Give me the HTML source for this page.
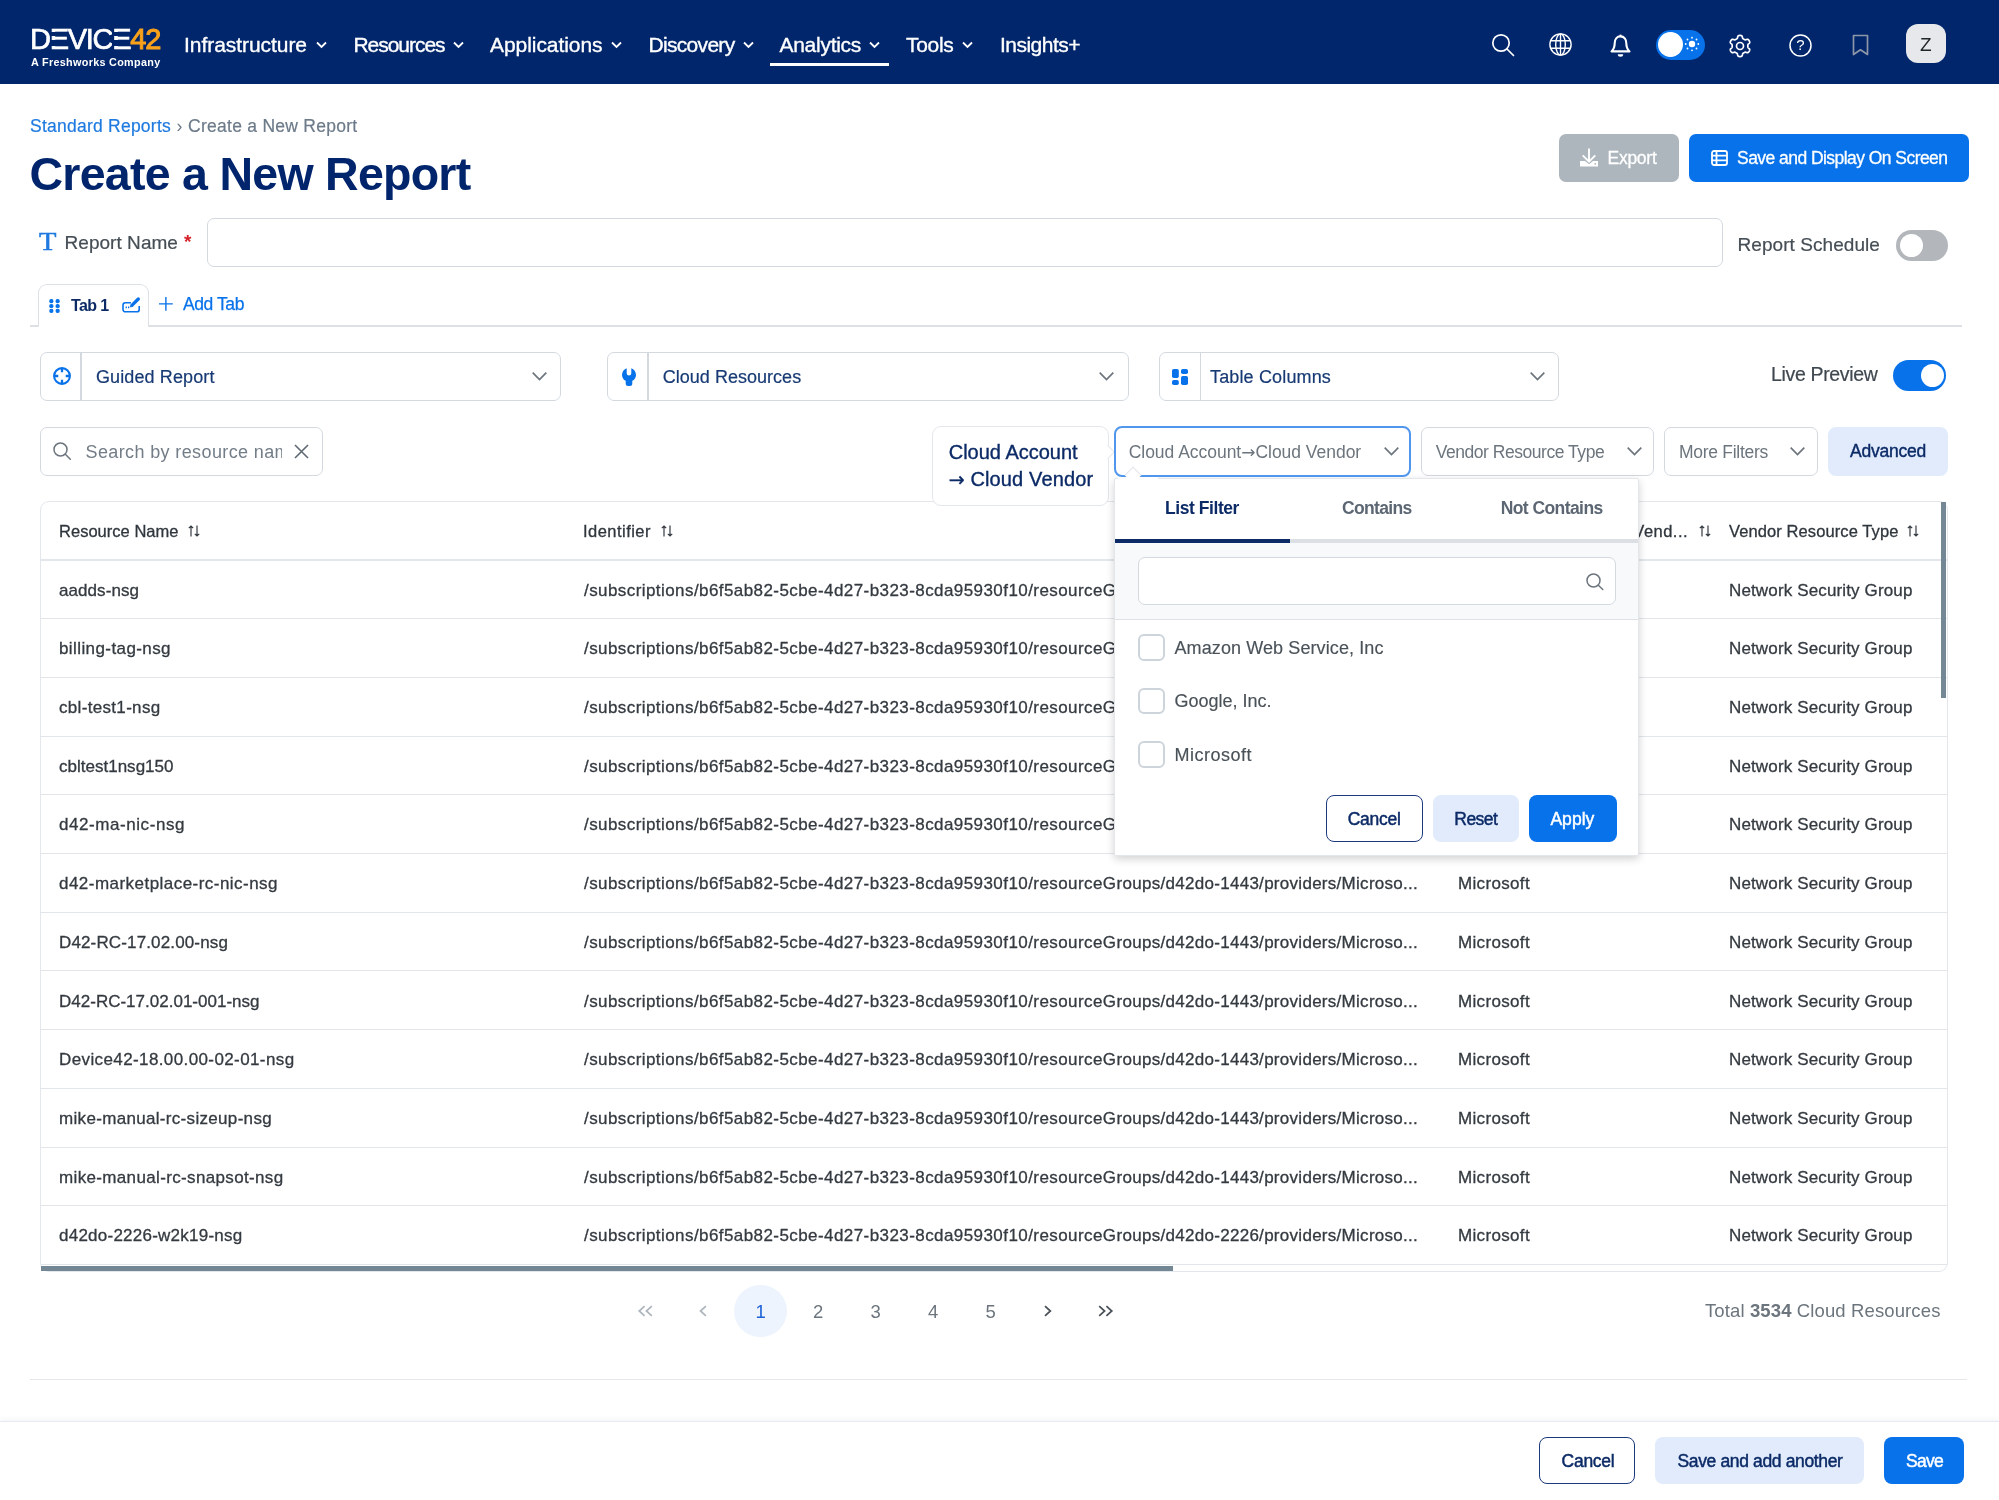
<!DOCTYPE html>
<html lang="en"><head><meta charset="utf-8"><title>Create a New Report</title>
<style>
*{box-sizing:border-box;margin:0;padding:0}
html,body{width:1999px;height:1500px;overflow:hidden;background:#fff}
body{position:relative;font-family:'Liberation Sans',sans-serif;color:#343a40}
.t{position:absolute;white-space:nowrap;line-height:1;display:block}
.a{position:absolute}
.box{position:absolute;border:1.5px solid #d3d9df;border-radius:7px;background:#fff}
svg{position:absolute;overflow:visible}
.nav{position:absolute;left:0;top:0;width:1999px;height:83.5px;background:#01266b}
.hl{position:absolute;height:1.5px;background:#e6e9ed}
.btn{position:absolute;border-radius:7px}
b{font-weight:700}
.root{position:absolute;left:0;top:0;width:1999px;height:1500px;will-change:transform}
.e{position:relative}
.e::before,.e::after{content:"";position:absolute;left:0.2px;width:6.3px;background:#01266b}
.e::before{top:8.5px;height:4.5px}
.e::after{top:16.5px;height:6px}

</style></head>
<body>
<div class="root">
<div class="nav"></div>
<span class="t" style="left:30.00px;top:25.45px;font-size:29px;color:#fff;letter-spacing:-1.281px;-webkit-text-stroke:0.7px #fff;">D<span class="e">E</span>VIC<span class="e">E</span><span style="color:#f9a11b;-webkit-text-stroke:1px #f9a11b">42</span></span>
<span class="t" style="left:31.00px;top:57.16px;font-size:10.8px;color:#fff;font-weight:700;letter-spacing:0.315px;">A Freshworks Company</span>
<span class="t" style="left:184.00px;top:34.22px;font-size:21px;color:#fff;letter-spacing:-0.051px;-webkit-text-stroke:0.35px #fff;">Infrastructure</span>
<svg style="left:315.5px;top:41.300px" width="11" height="8" viewBox="0 0 11 8"><path d="M1 1.500 5.500 6 10 1.500" fill="none" stroke="#fff" stroke-width="1.800"/></svg>
<span class="t" style="left:353.50px;top:34.22px;font-size:21px;color:#fff;letter-spacing:-1.043px;-webkit-text-stroke:0.35px #fff;">Resources</span>
<svg style="left:452.5px;top:41.300px" width="11" height="8" viewBox="0 0 11 8"><path d="M1 1.500 5.500 6 10 1.500" fill="none" stroke="#fff" stroke-width="1.800"/></svg>
<span class="t" style="left:490.00px;top:34.22px;font-size:21px;color:#fff;letter-spacing:-0.061px;-webkit-text-stroke:0.35px #fff;">Applications</span>
<svg style="left:610.5px;top:41.300px" width="11" height="8" viewBox="0 0 11 8"><path d="M1 1.500 5.500 6 10 1.500" fill="none" stroke="#fff" stroke-width="1.800"/></svg>
<span class="t" style="left:648.50px;top:34.22px;font-size:21px;color:#fff;letter-spacing:-0.688px;-webkit-text-stroke:0.35px #fff;">Discovery</span>
<svg style="left:742.5px;top:41.300px" width="11" height="8" viewBox="0 0 11 8"><path d="M1 1.500 5.500 6 10 1.500" fill="none" stroke="#fff" stroke-width="1.800"/></svg>
<span class="t" style="left:779.50px;top:34.22px;font-size:21px;color:#fff;letter-spacing:-0.281px;-webkit-text-stroke:0.35px #fff;">Analytics</span>
<svg style="left:869.0px;top:41.300px" width="11" height="8" viewBox="0 0 11 8"><path d="M1 1.500 5.500 6 10 1.500" fill="none" stroke="#fff" stroke-width="1.800"/></svg>
<span class="t" style="left:906.00px;top:34.22px;font-size:21px;color:#fff;letter-spacing:-0.306px;-webkit-text-stroke:0.35px #fff;">Tools</span>
<svg style="left:962.0px;top:41.300px" width="11" height="8" viewBox="0 0 11 8"><path d="M1 1.500 5.500 6 10 1.500" fill="none" stroke="#fff" stroke-width="1.800"/></svg>
<span class="t" style="left:1000.00px;top:34.22px;font-size:21px;color:#fff;letter-spacing:-0.516px;-webkit-text-stroke:0.35px #fff;">Insights+</span>
<div class="a" style="left:770px;top:63px;width:118.5px;height:3px;background:#fff"></div>
<svg style="left:1491px;top:33px" width="24" height="24" viewBox="0 0 24 24" fill="none" stroke="#fff" stroke-width="1.7"><circle cx="10" cy="10" r="8.2"/><path d="M16 16 22.5 22.5" stroke-linecap="round"/></svg>
<svg style="left:1549px;top:33px" width="23" height="23" viewBox="0 0 23 23" fill="none" stroke="#fff" stroke-width="1.4"><circle cx="11.5" cy="11.5" r="10.6"/><ellipse cx="11.5" cy="11.5" rx="4.8" ry="10.6"/><path d="M11.5 .9V22.1M1.6 7.8H21.4M1.6 15.2H21.4"/></svg>
<svg style="left:1610px;top:34px" width="21" height="24" viewBox="0 0 21 24" fill="none" stroke="#fff" stroke-width="1.9"><path d="M10.500 2.400C6.800 2.400 4.700 5.400 4.700 9.200c0 4-1.300 6.400-3.200 8.200h18c-1.900-1.800-3.200-4.200-3.200-8.200 0-3.800-2.100-6.800-5.800-6.800Z" stroke-linejoin="round" stroke-width="2.100"/><path d="M7.800 20.300h5.400a2.700 2.500 0 0 1-5.400 0Z" fill="#fff" stroke="none"/><path d="M10.500 0.600V2.200"/></svg>
<div class="a" style="left:1656.200px;top:29.800px;width:48.800px;height:30.200px;border-radius:15.100px;background:#0772ea"></div><div class="a" style="left:1658.400px;top:32.400px;width:24.800px;height:24.800px;border-radius:50%;background:#fff"></div>
<svg style="left:1684.400px;top:36.300px" width="16" height="16" viewBox="0 0 16 16" fill="#fff"><circle cx="8" cy="8" r="3.200"/><g><circle cx="8" cy="1.700" r="0.900"/><circle cx="8" cy="14.300" r="0.900"/><circle cx="1.700" cy="8" r="0.900"/><circle cx="14.300" cy="8" r="0.900"/><circle cx="3.500" cy="3.500" r="0.900"/><circle cx="12.500" cy="12.500" r="0.900"/><circle cx="3.500" cy="12.500" r="0.900"/><circle cx="12.500" cy="3.500" r="0.900"/></g></svg>
<svg style="left:1728.300px;top:33.900px" width="24" height="24" viewBox="0 0 24 24" fill="none" stroke="#fff" stroke-width="1.700" stroke-linejoin="round"><path d="M19.83 12.00 19.83 12.21 19.83 12.41 19.83 12.62 19.83 12.82 19.85 13.03 19.90 13.25 20.00 13.48 20.19 13.74 20.49 14.04 20.89 14.38 21.27 14.74 21.54 15.10 21.68 15.43 21.71 15.73 21.68 16.01 21.61 16.28 21.52 16.54 21.41 16.79 21.28 17.04 21.15 17.28 21.01 17.52 20.85 17.75 20.69 17.97 20.51 18.18 20.31 18.38 20.09 18.55 19.81 18.67 19.45 18.71 19.01 18.65 18.51 18.51 18.01 18.34 17.60 18.22 17.28 18.19 17.03 18.21 16.82 18.28 16.63 18.37 16.45 18.47 16.27 18.58 16.09 18.68 15.92 18.78 15.74 18.89 15.56 18.99 15.38 19.09 15.20 19.20 15.03 19.32 14.87 19.46 14.72 19.67 14.59 19.96 14.48 20.38 14.38 20.89 14.26 21.40 14.08 21.81 13.87 22.09 13.63 22.28 13.37 22.39 13.10 22.46 12.83 22.51 12.55 22.54 12.28 22.56 12.00 22.57 11.72 22.56 11.45 22.54 11.17 22.51 10.90 22.46 10.63 22.39 10.37 22.28 10.13 22.09 9.92 21.81 9.74 21.40 9.62 20.89 9.52 20.38 9.41 19.96 9.28 19.67 9.13 19.46 8.97 19.32 8.80 19.20 8.62 19.09 8.44 18.99 8.26 18.89 8.08 18.78 7.91 18.68 7.73 18.58 7.55 18.47 7.37 18.37 7.18 18.28 6.97 18.21 6.72 18.19 6.40 18.22 5.99 18.34 5.49 18.51 4.99 18.65 4.55 18.71 4.19 18.67 3.91 18.55 3.69 18.38 3.49 18.18 3.31 17.97 3.15 17.75 2.99 17.52 2.85 17.28 2.72 17.04 2.59 16.79 2.48 16.54 2.39 16.28 2.32 16.01 2.29 15.73 2.32 15.43 2.46 15.10 2.73 14.74 3.11 14.38 3.51 14.04 3.81 13.74 4.00 13.48 4.10 13.25 4.15 13.03 4.17 12.82 4.17 12.62 4.17 12.41 4.17 12.21 4.17 12.00 4.17 11.79 4.17 11.59 4.17 11.38 4.17 11.18 4.15 10.97 4.10 10.75 4.00 10.52 3.81 10.26 3.51 9.96 3.11 9.62 2.73 9.26 2.46 8.90 2.32 8.57 2.29 8.27 2.32 7.99 2.39 7.72 2.48 7.46 2.59 7.21 2.72 6.96 2.85 6.72 2.99 6.48 3.15 6.25 3.31 6.03 3.49 5.82 3.69 5.62 3.91 5.45 4.19 5.33 4.55 5.29 4.99 5.35 5.49 5.49 5.99 5.66 6.40 5.78 6.72 5.81 6.97 5.79 7.18 5.72 7.37 5.63 7.55 5.53 7.73 5.42 7.91 5.32 8.08 5.22 8.26 5.11 8.44 5.01 8.62 4.91 8.80 4.80 8.97 4.68 9.13 4.54 9.28 4.33 9.41 4.04 9.52 3.62 9.62 3.11 9.74 2.60 9.92 2.19 10.13 1.91 10.37 1.72 10.63 1.61 10.90 1.54 11.17 1.49 11.45 1.46 11.72 1.44 12.00 1.43 12.28 1.44 12.55 1.46 12.83 1.49 13.10 1.54 13.37 1.61 13.63 1.72 13.87 1.91 14.08 2.19 14.26 2.60 14.38 3.11 14.48 3.62 14.59 4.04 14.72 4.33 14.87 4.54 15.03 4.68 15.20 4.80 15.38 4.91 15.56 5.01 15.74 5.11 15.92 5.22 16.09 5.32 16.27 5.42 16.45 5.53 16.63 5.63 16.82 5.72 17.03 5.79 17.28 5.81 17.60 5.78 18.01 5.66 18.51 5.49 19.01 5.35 19.45 5.29 19.81 5.33 20.09 5.45 20.31 5.62 20.51 5.82 20.69 6.03 20.85 6.25 21.01 6.48 21.15 6.72 21.28 6.96 21.41 7.21 21.52 7.46 21.61 7.72 21.68 7.99 21.71 8.27 21.68 8.57 21.54 8.90 21.27 9.26 20.89 9.62 20.49 9.96 20.19 10.26 20.00 10.52 19.90 10.75 19.85 10.97 19.83 11.18 19.83 11.38 19.83 11.59 19.83 11.79Z"/><circle cx="12" cy="12" r="3.500"/></svg>
<svg style="left:1789px;top:33.500px" width="23" height="23" viewBox="0 0 23 23" fill="none" stroke="#fff" stroke-width="1.500"><circle cx="11.500" cy="11.500" r="10.500"/></svg>
<span class="t" style="left:1796.30px;top:37.30px;font-size:15px;color:#fff;">?</span>
<svg style="left:1852px;top:34px" width="17" height="22" viewBox="0 0 17 22" fill="none" stroke="#8d97a8" stroke-width="1.700"><path d="M1.500 1.500H15.500V20.500L8.500 15.800 1.500 20.500Z" stroke-linejoin="round"/></svg>
<div class="a" style="left:1906.300px;top:23.500px;width:39.800px;height:39.800px;border-radius:12px;background:#e6e8eb"></div>
<span class="t" style="left:1920.00px;top:34.92px;font-size:19px;color:#212529;">Z</span>
<span class="t" style="left:30.00px;top:117.89px;font-size:17.5px;color:#1f7ae0;letter-spacing:0.239px;-webkit-text-stroke:0.200px #1f7ae0;">Standard Reports</span>
<span class="t" style="left:176.50px;top:117.89px;font-size:17.5px;color:#6c7a89;">›</span>
<span class="t" style="left:188.00px;top:117.89px;font-size:17.5px;color:#6c7a89;letter-spacing:0.269px;-webkit-text-stroke:0.200px #6c7a89;">Create a New Report</span>
<span class="t" style="left:29.50px;top:150.64px;font-size:46.5px;color:#00256c;font-weight:700;letter-spacing:-0.727px;">Create a New Report</span>
<div class="btn" style="left:1558.500px;top:134px;width:120px;height:47.500px;background:#adb5bd"></div>
<svg style="left:1580px;top:148px" width="19" height="18" viewBox="0 0 19 18" fill="#fff"><path d="M9 0.500V13M2.700 7.300 9 13.600 15.300 7.300" fill="none" stroke="#fff" stroke-width="1.900"/><path d="M0 13h5l4 3.200 4-3.200h5v5.500h-18z"/><circle cx="15.200" cy="15.800" r="0.900" fill="#adb5bd"/></svg>
<span class="t" style="left:1607.50px;top:149.89px;font-size:17.5px;color:#fff;letter-spacing:-0.263px;-webkit-text-stroke:0.3px #fff;">Export</span>
<div class="btn" style="left:1689px;top:134px;width:280px;height:47.500px;background:#0772ea"></div>
<svg style="left:1711px;top:149.500px" width="17" height="16" viewBox="0 0 17 16" fill="none" stroke="#fff" stroke-width="1.800"><rect x="1" y="1" width="15" height="14" rx="2"/><path d="M1 5.700H16M1 10.300H16M5.500 1V15"/></svg>
<span class="t" style="left:1737.00px;top:149.89px;font-size:17.5px;color:#fff;letter-spacing:-0.547px;-webkit-text-stroke:0.3px #fff;">Save and Display On Screen</span>
<span class="t" style="left:38.50px;top:228.91px;font-size:25.5px;color:#1f7ae0;font-family:'Liberation Serif',serif;transform:scaleX(1.12);transform-origin:0 0;-webkit-text-stroke:0.500px #1f7ae0;">T</span>
<span class="t" style="left:64.50px;top:232.62px;font-size:19px;color:#454d55;letter-spacing:0.045px;-webkit-text-stroke:0.2px #454d55;">Report Name</span>
<span class="t" style="left:184.00px;top:232.22px;font-size:19px;color:#d6202a;font-weight:700;">*</span>
<div class="box" style="left:207px;top:217.500px;width:1515.500px;height:49.500px"></div>
<span class="t" style="left:1737.50px;top:234.92px;font-size:19px;color:#454d55;letter-spacing:0.064px;-webkit-text-stroke:0.2px #454d55;">Report Schedule</span>
<div class="a" style="left:1896px;top:230px;width:52px;height:31px;border-radius:16px;background:#b3b7bb"></div><div class="a" style="left:1900px;top:234px;width:23px;height:23px;border-radius:50%;background:#fff"></div>
<div class="hl" style="left:30px;top:325px;width:1931.500px;height:1.800px;background:#dde1e6"></div>
<div class="a" style="left:38px;top:283.700px;width:111px;height:43.300px;border:1.800px solid #dde1e6;border-bottom:none;border-radius:9px 9px 0 0;background:#fff"></div>
<svg style="left:48.800px;top:299.300px" width="11" height="14" viewBox="0 0 10.5 14" fill="#0772ea"><rect x="0" y="0" width="4.200" height="4.200" rx="1.900"/><rect x="0" y="4.9" width="4.200" height="4.200" rx="1.900"/><rect x="0" y="9.8" width="4.200" height="4.200" rx="1.900"/><rect x="6.3" y="0" width="4.200" height="4.200" rx="1.900"/><rect x="6.3" y="4.9" width="4.200" height="4.200" rx="1.900"/><rect x="6.3" y="9.8" width="4.200" height="4.200" rx="1.900"/></svg>
<span class="t" style="left:71.00px;top:297.66px;font-size:16px;color:#0b2a66;font-weight:700;letter-spacing:-0.622px;">Tab 1</span>
<svg style="left:122px;top:296.500px" width="19" height="16" viewBox="0 0 19 16" fill="none" stroke="#0772ea" stroke-width="1.600"><path d="M9 5.800H3.400a2.400 2.400 0 0 0-2.400 2.400v4.200a2.400 2.400 0 0 0 2.400 2.400h11.400a2.400 2.400 0 0 0 2.400-2.400V9"/><path d="M16.300 2 10.600 7.700" stroke-width="3.300" stroke-linecap="round"/><path d="M8.300 10 9 7.300 11 9.300Z" fill="#0772ea" stroke-width="0.800"/><path d="M3.600 10.300h1.300M6 10.300h1.300" stroke-width="1.700"/></svg>
<svg style="left:159.200px;top:297px" width="13.800" height="13.800" viewBox="0 0 13.800 13.800" stroke="#0772ea" stroke-width="1.400"><path d="M6.900 0V13.800M0 6.900H13.800"/></svg>
<span class="t" style="left:183.00px;top:296.19px;font-size:17.5px;color:#0772ea;letter-spacing:-0.415px;-webkit-text-stroke:0.25px #0772ea;">Add Tab</span>
<div class="box" style="left:40px;top:351.500px;width:521px;height:49.500px"></div>
<div class="a" style="left:80.45px;top:352px;width:1.500px;height:48.500px;background:#d3d9df"></div>
<span class="t" style="left:96.00px;top:367.76px;font-size:18px;color:#173a74;letter-spacing:0.109px;-webkit-text-stroke:0.2px #173a74;">Guided Report</span>
<svg style="left:532.2px;top:372.45px" width="15" height="8.5" viewBox="0 0 15 8.5" fill="none" stroke="#6c757d" stroke-width="1.7"><path d="M0.700 0.700 7.5 7.5 14.3 0.700"/></svg>
<div class="box" style="left:606.5px;top:351.500px;width:522.0px;height:49.500px"></div>
<div class="a" style="left:647.45px;top:352px;width:1.500px;height:48.500px;background:#d3d9df"></div>
<span class="t" style="left:662.70px;top:367.76px;font-size:18px;color:#173a74;letter-spacing:0.028px;-webkit-text-stroke:0.2px #173a74;">Cloud Resources</span>
<svg style="left:1099.0px;top:372.45px" width="15" height="8.5" viewBox="0 0 15 8.5" fill="none" stroke="#6c757d" stroke-width="1.7"><path d="M0.700 0.700 7.5 7.5 14.3 0.700"/></svg>
<div class="box" style="left:1159px;top:351.500px;width:399.5px;height:49.500px"></div>
<div class="a" style="left:1199.75px;top:352px;width:1.500px;height:48.500px;background:#d3d9df"></div>
<span class="t" style="left:1210.00px;top:367.76px;font-size:18px;color:#173a74;letter-spacing:0.149px;-webkit-text-stroke:0.2px #173a74;">Table Columns</span>
<svg style="left:1529.5px;top:372.45px" width="15" height="8.5" viewBox="0 0 15 8.5" fill="none" stroke="#6c757d" stroke-width="1.7"><path d="M0.700 0.700 7.5 7.5 14.3 0.700"/></svg>
<svg style="left:52.750px;top:367.300px" width="18" height="18" viewBox="0 0 18 18" fill="none" stroke="#0772ea"><circle cx="9" cy="9" r="7.900" stroke-width="2.100"/><path d="M9 1.500V5.300M9 12.700V16.500M1.500 9H5.300M12.700 9H16.500" stroke-width="2.300"/></svg>
<svg style="left:621.700px;top:367.600px" width="14" height="18" viewBox="0 0 14 18" fill="#0772ea"><path d="M4.700 0.300C2 1.300 0 3.900 0 6.900c0 2.600 1.500 4.800 3.700 5.900V15.500a2.500 2.500 0 0 0 2.500 2.500h1.600a2.500 2.500 0 0 0 2.500-2.500V12.800C12.500 11.700 14 9.500 14 6.900 14 3.900 12 1.300 9.300 0.300V5.200a2.300 2.300 0 0 1-4.600 0Z"/></svg>
<svg style="left:1172px;top:369px" width="16" height="16" viewBox="0 0 16 16" fill="#0772ea"><rect x="0" y="0" width="6.800" height="9" rx="1.800"/><rect x="0" y="11" width="6.800" height="5" rx="1.800"/><rect x="9" y="0" width="7" height="5" rx="1.800"/><rect x="9" y="7" width="7" height="9" rx="1.800"/></svg>
<span class="t" style="left:1771.00px;top:364.69px;font-size:19.5px;color:#3f474f;letter-spacing:-0.337px;-webkit-text-stroke:0.2px #3f474f;">Live Preview</span>
<div class="a" style="left:1893px;top:360px;width:52.500px;height:31px;border-radius:16px;background:#0772ea"></div><div class="a" style="left:1920.500px;top:364px;width:23px;height:23px;border-radius:50%;background:#fff"></div>
<div class="box" style="left:40px;top:427px;width:282.500px;height:49px"></div>
<svg style="left:52.800px;top:442.300px" width="18" height="18" viewBox="0 0 18 18" fill="none" stroke="#6c757d" stroke-width="1.500"><circle cx="7.500" cy="7.500" r="6.500"/><path d="M12.300 12.300 17.300 17.300" stroke-linecap="round"/></svg>
<div class="a" style="left:85px;top:440px;width:196.500px;height:24px;overflow:hidden"><span class="t" style="left:0.50px;top:3.26px;font-size:18px;color:#737d88;letter-spacing:0.380px;">Search by resource name</span></div>
<svg style="left:293.500px;top:444px" width="15" height="15" viewBox="0 0 15 15" stroke="#5f6973" stroke-width="1.600"><path d="M1 1 14 14M14 1 1 14"/></svg>
<div class="a" style="left:40px;top:500.5px;width:1907.5px;height:771.5px;border:1.500px solid #e3e7eb;border-radius:9px;background:#fff"></div>
<div class="hl" style="left:41px;top:559px;width:1905.5px;height:2px;background:#e3e7eb"></div>
<div class="hl" style="left:41px;top:618px;width:1905.5px;height:1px;background:#e2e6ea"></div>
<div class="hl" style="left:41px;top:677px;width:1905.5px;height:1px;background:#e2e6ea"></div>
<div class="hl" style="left:41px;top:736px;width:1905.5px;height:1px;background:#e2e6ea"></div>
<div class="hl" style="left:41px;top:794px;width:1905.5px;height:1px;background:#e2e6ea"></div>
<div class="hl" style="left:41px;top:853px;width:1905.5px;height:1px;background:#e2e6ea"></div>
<div class="hl" style="left:41px;top:912px;width:1905.5px;height:1px;background:#e2e6ea"></div>
<div class="hl" style="left:41px;top:970px;width:1905.5px;height:1px;background:#e2e6ea"></div>
<div class="hl" style="left:41px;top:1029px;width:1905.5px;height:1px;background:#e2e6ea"></div>
<div class="hl" style="left:41px;top:1088px;width:1905.5px;height:1px;background:#e2e6ea"></div>
<div class="hl" style="left:41px;top:1147px;width:1905.5px;height:1px;background:#e2e6ea"></div>
<div class="hl" style="left:41px;top:1205px;width:1905.5px;height:1px;background:#e2e6ea"></div>
<div class="hl" style="left:41px;top:1264px;width:1905.5px;height:1px;background:#e2e6ea"></div>
<span class="t" style="left:59.00px;top:523.03px;font-size:16.5px;color:#2f363d;letter-spacing:0.022px;-webkit-text-stroke:0.3px #2f363d;">Resource Name</span>
<svg style="left:188px;top:525px" width="12" height="12" viewBox="0 0 12 12" fill="none" stroke="#343a40" stroke-width="1.200"><path d="M3 11.500V1M0.800 3.200 3 1 5.200 3.200M9 0.500V11M6.800 8.800 9 11 11.200 8.800"/></svg>
<span class="t" style="left:583.00px;top:523.03px;font-size:16.5px;color:#2f363d;letter-spacing:0.470px;-webkit-text-stroke:0.3px #2f363d;">Identifier</span>
<svg style="left:660.5px;top:525px" width="12" height="12" viewBox="0 0 12 12" fill="none" stroke="#343a40" stroke-width="1.200"><path d="M3 11.500V1M0.800 3.200 3 1 5.200 3.200M9 0.500V11M6.800 8.800 9 11 11.200 8.800"/></svg>
<span class="t" style="left:1458.00px;top:523.03px;font-size:16.5px;color:#2f363d;letter-spacing:0.473px;-webkit-text-stroke:0.3px #2f363d;">Cloud Account<span style="font-family:'DejaVu Sans',sans-serif;font-size:14px">→</span>Cloud Vend...</span>
<svg style="left:1699px;top:525px" width="12" height="12" viewBox="0 0 12 12" fill="none" stroke="#343a40" stroke-width="1.200"><path d="M3 11.500V1M0.800 3.200 3 1 5.200 3.200M9 0.500V11M6.800 8.800 9 11 11.200 8.800"/></svg>
<span class="t" style="left:1729.00px;top:523.03px;font-size:16.5px;color:#2f363d;letter-spacing:0.097px;-webkit-text-stroke:0.3px #2f363d;">Vendor Resource Type</span>
<svg style="left:1907px;top:525px" width="12" height="12" viewBox="0 0 12 12" fill="none" stroke="#343a40" stroke-width="1.200"><path d="M3 11.500V1M0.800 3.200 3 1 5.200 3.200M9 0.500V11M6.800 8.800 9 11 11.200 8.800"/></svg>
<span class="t" style="left:59.00px;top:581.61px;font-size:17px;color:#343a40;letter-spacing:0.068px;-webkit-text-stroke:0.3px #343a40;">aadds-nsg</span>
<span class="t" style="left:584.00px;top:581.61px;font-size:17px;color:#343a40;letter-spacing:0.425px;-webkit-text-stroke:0.3px #343a40;">/subscriptions/b6f5ab82-5cbe-4d27-b323-8cda95930f10/resourceG</span>
<span class="t" style="left:1116.60px;top:581.61px;font-size:17px;color:#343a40;letter-spacing:0.283px;-webkit-text-stroke:0.3px #343a40;">roups/d42do-1443/providers/Microso...</span>
<span class="t" style="left:1458.00px;top:581.61px;font-size:17px;color:#343a40;letter-spacing:0.337px;-webkit-text-stroke:0.3px #343a40;">Microsoft</span>
<span class="t" style="left:1729.00px;top:581.61px;font-size:17px;color:#343a40;letter-spacing:0.138px;-webkit-text-stroke:0.3px #343a40;">Network Security Group</span>
<span class="t" style="left:59.00px;top:640.32px;font-size:17px;color:#343a40;letter-spacing:0.410px;-webkit-text-stroke:0.3px #343a40;">billing-tag-nsg</span>
<span class="t" style="left:584.00px;top:640.32px;font-size:17px;color:#343a40;letter-spacing:0.425px;-webkit-text-stroke:0.3px #343a40;">/subscriptions/b6f5ab82-5cbe-4d27-b323-8cda95930f10/resourceG</span>
<span class="t" style="left:1116.60px;top:640.32px;font-size:17px;color:#343a40;letter-spacing:0.283px;-webkit-text-stroke:0.3px #343a40;">roups/d42do-1443/providers/Microso...</span>
<span class="t" style="left:1458.00px;top:640.32px;font-size:17px;color:#343a40;letter-spacing:0.337px;-webkit-text-stroke:0.3px #343a40;">Microsoft</span>
<span class="t" style="left:1729.00px;top:640.32px;font-size:17px;color:#343a40;letter-spacing:0.138px;-webkit-text-stroke:0.3px #343a40;">Network Security Group</span>
<span class="t" style="left:59.00px;top:699.03px;font-size:17px;color:#343a40;letter-spacing:0.321px;-webkit-text-stroke:0.3px #343a40;">cbl-test1-nsg</span>
<span class="t" style="left:584.00px;top:699.03px;font-size:17px;color:#343a40;letter-spacing:0.425px;-webkit-text-stroke:0.3px #343a40;">/subscriptions/b6f5ab82-5cbe-4d27-b323-8cda95930f10/resourceG</span>
<span class="t" style="left:1116.60px;top:699.03px;font-size:17px;color:#343a40;letter-spacing:0.283px;-webkit-text-stroke:0.3px #343a40;">roups/d42do-1443/providers/Microso...</span>
<span class="t" style="left:1458.00px;top:699.03px;font-size:17px;color:#343a40;letter-spacing:0.337px;-webkit-text-stroke:0.3px #343a40;">Microsoft</span>
<span class="t" style="left:1729.00px;top:699.03px;font-size:17px;color:#343a40;letter-spacing:0.138px;-webkit-text-stroke:0.3px #343a40;">Network Security Group</span>
<span class="t" style="left:59.00px;top:757.74px;font-size:17px;color:#343a40;letter-spacing:0.009px;-webkit-text-stroke:0.3px #343a40;">cbltest1nsg150</span>
<span class="t" style="left:584.00px;top:757.74px;font-size:17px;color:#343a40;letter-spacing:0.425px;-webkit-text-stroke:0.3px #343a40;">/subscriptions/b6f5ab82-5cbe-4d27-b323-8cda95930f10/resourceG</span>
<span class="t" style="left:1116.60px;top:757.74px;font-size:17px;color:#343a40;letter-spacing:0.283px;-webkit-text-stroke:0.3px #343a40;">roups/d42do-1443/providers/Microso...</span>
<span class="t" style="left:1458.00px;top:757.74px;font-size:17px;color:#343a40;letter-spacing:0.337px;-webkit-text-stroke:0.3px #343a40;">Microsoft</span>
<span class="t" style="left:1729.00px;top:757.74px;font-size:17px;color:#343a40;letter-spacing:0.138px;-webkit-text-stroke:0.3px #343a40;">Network Security Group</span>
<span class="t" style="left:59.00px;top:816.45px;font-size:17px;color:#343a40;letter-spacing:0.564px;-webkit-text-stroke:0.3px #343a40;">d42-ma-nic-nsg</span>
<span class="t" style="left:584.00px;top:816.45px;font-size:17px;color:#343a40;letter-spacing:0.425px;-webkit-text-stroke:0.3px #343a40;">/subscriptions/b6f5ab82-5cbe-4d27-b323-8cda95930f10/resourceG</span>
<span class="t" style="left:1116.60px;top:816.45px;font-size:17px;color:#343a40;letter-spacing:0.283px;-webkit-text-stroke:0.3px #343a40;">roups/d42do-1443/providers/Microso...</span>
<span class="t" style="left:1458.00px;top:816.45px;font-size:17px;color:#343a40;letter-spacing:0.337px;-webkit-text-stroke:0.3px #343a40;">Microsoft</span>
<span class="t" style="left:1729.00px;top:816.45px;font-size:17px;color:#343a40;letter-spacing:0.138px;-webkit-text-stroke:0.3px #343a40;">Network Security Group</span>
<span class="t" style="left:59.00px;top:875.16px;font-size:17px;color:#343a40;letter-spacing:0.465px;-webkit-text-stroke:0.3px #343a40;">d42-marketplace-rc-nic-nsg</span>
<span class="t" style="left:584.00px;top:875.16px;font-size:17px;color:#343a40;letter-spacing:0.425px;-webkit-text-stroke:0.3px #343a40;">/subscriptions/b6f5ab82-5cbe-4d27-b323-8cda95930f10/resourceG</span>
<span class="t" style="left:1116.60px;top:875.16px;font-size:17px;color:#343a40;letter-spacing:0.283px;-webkit-text-stroke:0.3px #343a40;">roups/d42do-1443/providers/Microso...</span>
<span class="t" style="left:1458.00px;top:875.16px;font-size:17px;color:#343a40;letter-spacing:0.337px;-webkit-text-stroke:0.3px #343a40;">Microsoft</span>
<span class="t" style="left:1729.00px;top:875.16px;font-size:17px;color:#343a40;letter-spacing:0.138px;-webkit-text-stroke:0.3px #343a40;">Network Security Group</span>
<span class="t" style="left:59.00px;top:933.87px;font-size:17px;color:#343a40;letter-spacing:0.141px;-webkit-text-stroke:0.3px #343a40;">D42-RC-17.02.00-nsg</span>
<span class="t" style="left:584.00px;top:933.87px;font-size:17px;color:#343a40;letter-spacing:0.425px;-webkit-text-stroke:0.3px #343a40;">/subscriptions/b6f5ab82-5cbe-4d27-b323-8cda95930f10/resourceG</span>
<span class="t" style="left:1116.60px;top:933.87px;font-size:17px;color:#343a40;letter-spacing:0.283px;-webkit-text-stroke:0.3px #343a40;">roups/d42do-1443/providers/Microso...</span>
<span class="t" style="left:1458.00px;top:933.87px;font-size:17px;color:#343a40;letter-spacing:0.337px;-webkit-text-stroke:0.3px #343a40;">Microsoft</span>
<span class="t" style="left:1729.00px;top:933.87px;font-size:17px;color:#343a40;letter-spacing:0.138px;-webkit-text-stroke:0.3px #343a40;">Network Security Group</span>
<span class="t" style="left:59.00px;top:992.58px;font-size:17px;color:#343a40;letter-spacing:0.007px;-webkit-text-stroke:0.3px #343a40;">D42-RC-17.02.01-001-nsg</span>
<span class="t" style="left:584.00px;top:992.58px;font-size:17px;color:#343a40;letter-spacing:0.425px;-webkit-text-stroke:0.3px #343a40;">/subscriptions/b6f5ab82-5cbe-4d27-b323-8cda95930f10/resourceG</span>
<span class="t" style="left:1116.60px;top:992.58px;font-size:17px;color:#343a40;letter-spacing:0.283px;-webkit-text-stroke:0.3px #343a40;">roups/d42do-1443/providers/Microso...</span>
<span class="t" style="left:1458.00px;top:992.58px;font-size:17px;color:#343a40;letter-spacing:0.337px;-webkit-text-stroke:0.3px #343a40;">Microsoft</span>
<span class="t" style="left:1729.00px;top:992.58px;font-size:17px;color:#343a40;letter-spacing:0.138px;-webkit-text-stroke:0.3px #343a40;">Network Security Group</span>
<span class="t" style="left:59.00px;top:1051.29px;font-size:17px;color:#343a40;letter-spacing:0.392px;-webkit-text-stroke:0.3px #343a40;">Device42-18.00.00-02-01-nsg</span>
<span class="t" style="left:584.00px;top:1051.29px;font-size:17px;color:#343a40;letter-spacing:0.425px;-webkit-text-stroke:0.3px #343a40;">/subscriptions/b6f5ab82-5cbe-4d27-b323-8cda95930f10/resourceG</span>
<span class="t" style="left:1116.60px;top:1051.29px;font-size:17px;color:#343a40;letter-spacing:0.283px;-webkit-text-stroke:0.3px #343a40;">roups/d42do-1443/providers/Microso...</span>
<span class="t" style="left:1458.00px;top:1051.29px;font-size:17px;color:#343a40;letter-spacing:0.337px;-webkit-text-stroke:0.3px #343a40;">Microsoft</span>
<span class="t" style="left:1729.00px;top:1051.29px;font-size:17px;color:#343a40;letter-spacing:0.138px;-webkit-text-stroke:0.3px #343a40;">Network Security Group</span>
<span class="t" style="left:59.00px;top:1110.00px;font-size:17px;color:#343a40;letter-spacing:0.319px;-webkit-text-stroke:0.3px #343a40;">mike-manual-rc-sizeup-nsg</span>
<span class="t" style="left:584.00px;top:1110.00px;font-size:17px;color:#343a40;letter-spacing:0.425px;-webkit-text-stroke:0.3px #343a40;">/subscriptions/b6f5ab82-5cbe-4d27-b323-8cda95930f10/resourceG</span>
<span class="t" style="left:1116.60px;top:1110.00px;font-size:17px;color:#343a40;letter-spacing:0.283px;-webkit-text-stroke:0.3px #343a40;">roups/d42do-1443/providers/Microso...</span>
<span class="t" style="left:1458.00px;top:1110.00px;font-size:17px;color:#343a40;letter-spacing:0.337px;-webkit-text-stroke:0.3px #343a40;">Microsoft</span>
<span class="t" style="left:1729.00px;top:1110.00px;font-size:17px;color:#343a40;letter-spacing:0.138px;-webkit-text-stroke:0.3px #343a40;">Network Security Group</span>
<span class="t" style="left:59.00px;top:1168.71px;font-size:17px;color:#343a40;letter-spacing:0.350px;-webkit-text-stroke:0.3px #343a40;">mike-manual-rc-snapsot-nsg</span>
<span class="t" style="left:584.00px;top:1168.71px;font-size:17px;color:#343a40;letter-spacing:0.425px;-webkit-text-stroke:0.3px #343a40;">/subscriptions/b6f5ab82-5cbe-4d27-b323-8cda95930f10/resourceG</span>
<span class="t" style="left:1116.60px;top:1168.71px;font-size:17px;color:#343a40;letter-spacing:0.283px;-webkit-text-stroke:0.3px #343a40;">roups/d42do-1443/providers/Microso...</span>
<span class="t" style="left:1458.00px;top:1168.71px;font-size:17px;color:#343a40;letter-spacing:0.337px;-webkit-text-stroke:0.3px #343a40;">Microsoft</span>
<span class="t" style="left:1729.00px;top:1168.71px;font-size:17px;color:#343a40;letter-spacing:0.138px;-webkit-text-stroke:0.3px #343a40;">Network Security Group</span>
<span class="t" style="left:59.00px;top:1227.42px;font-size:17px;color:#343a40;letter-spacing:0.244px;-webkit-text-stroke:0.3px #343a40;">d42do-2226-w2k19-nsg</span>
<span class="t" style="left:584.00px;top:1227.42px;font-size:17px;color:#343a40;letter-spacing:0.425px;-webkit-text-stroke:0.3px #343a40;">/subscriptions/b6f5ab82-5cbe-4d27-b323-8cda95930f10/resourceG</span>
<span class="t" style="left:1116.60px;top:1227.42px;font-size:17px;color:#343a40;letter-spacing:0.283px;-webkit-text-stroke:0.3px #343a40;">roups/d42do-2226/providers/Microso...</span>
<span class="t" style="left:1458.00px;top:1227.42px;font-size:17px;color:#343a40;letter-spacing:0.337px;-webkit-text-stroke:0.3px #343a40;">Microsoft</span>
<span class="t" style="left:1729.00px;top:1227.42px;font-size:17px;color:#343a40;letter-spacing:0.138px;-webkit-text-stroke:0.3px #343a40;">Network Security Group</span>
<div class="a" style="left:41px;top:1266px;width:1131.500px;height:5px;background:#748795"></div>
<div class="a" style="left:1941.300px;top:501.500px;width:4.800px;height:196.500px;background:#748795"></div>
<div class="a" style="left:932px;top:426px;width:176.500px;height:79.500px;border:1.500px solid #e4e7eb;border-radius:9px;background:#fff"></div>
<div class="a" style="left:1102.500px;top:446.600px;width:9.800px;height:9.800px;background:#fff;border-top:1.500px solid #e4e7eb;border-right:1.500px solid #e4e7eb;transform:rotate(45deg)"></div>
<span class="t" style="left:948.70px;top:442.27px;font-size:20px;color:#0b2a66;letter-spacing:0.001px;-webkit-text-stroke:0.35px #0b2a66;">Cloud Account</span>
<span class="t" style="left:948.70px;top:469.27px;font-size:20px;color:#0b2a66;letter-spacing:0.129px;-webkit-text-stroke:0.35px #0b2a66;"><span style="font-family:'DejaVu Sans',sans-serif;font-size:19px;line-height:0">→</span> Cloud Vendor</span>
<div class="box" style="left:1421px;top:427px;width:232.500px;height:48.500px"></div>
<span class="t" style="left:1435.70px;top:443.99px;font-size:17.5px;color:#6c757d;letter-spacing:-0.461px;">Vendor Resource Type</span>
<svg style="left:1626.5px;top:447.45px" width="15" height="8.5" viewBox="0 0 15 8.5" fill="none" stroke="#6c757d" stroke-width="1.7"><path d="M0.700 0.700 7.5 7.5 14.3 0.700"/></svg>
<div class="box" style="left:1664px;top:427px;width:153.500px;height:48.500px"></div>
<span class="t" style="left:1679.00px;top:443.99px;font-size:17.5px;color:#6c757d;letter-spacing:-0.281px;">More Filters</span>
<svg style="left:1790.0px;top:447.45px" width="15" height="8.5" viewBox="0 0 15 8.5" fill="none" stroke="#6c757d" stroke-width="1.7"><path d="M0.700 0.700 7.5 7.5 14.3 0.700"/></svg>
<div class="btn" style="left:1827.500px;top:427px;width:120.500px;height:48.500px;background:#e1ebfc;border-radius:8px"></div>
<span class="t" style="left:1850.00px;top:442.69px;font-size:17.5px;color:#0b2a66;letter-spacing:-0.230px;-webkit-text-stroke:0.4px #0b2a66;">Advanced</span>
<div class="a" style="left:1114.300px;top:477.500px;width:524.400px;height:378px;background:#fff;border:1px solid #e4e7ea;box-shadow:0 3px 8px rgba(0,0,0,.18);border-radius:2px"></div>
<div class="a" style="left:1115px;top:538.500px;width:523px;height:4px;background:#dcdfe3"></div>
<div class="a" style="left:1115px;top:538.500px;width:174.500px;height:4px;background:#0b2a66"></div>
<span class="t" style="left:1165.00px;top:499.89px;font-size:17.5px;color:#0b2a66;font-weight:700;letter-spacing:-0.433px;">List Filter</span>
<span class="t" style="left:1342.00px;top:499.89px;font-size:17.5px;color:#5c6773;font-weight:700;letter-spacing:-0.672px;">Contains</span>
<span class="t" style="left:1500.70px;top:499.89px;font-size:17.5px;color:#5c6773;font-weight:700;letter-spacing:-0.574px;">Not Contains</span>
<div class="a" style="left:1115px;top:542.500px;width:523px;height:77.500px;background:#f8f9fa;border-bottom:1.500px solid #dee2e6"></div>
<div class="box" style="left:1138px;top:556.500px;width:478px;height:48.500px"></div>
<svg style="left:1585.500px;top:573px" width="18" height="17" viewBox="0 0 18 17" fill="none" stroke="#6c757d" stroke-width="1.500"><circle cx="7.500" cy="7.500" r="6.500"/><path d="M12.300 12.300 16.800 16.500" stroke-linecap="round"/></svg>
<div class="a" style="left:1138px;top:634.0px;width:26.500px;height:26.500px;border:2px solid #cdd4db;border-radius:6px;background:#fff"></div>
<span class="t" style="left:1174.50px;top:638.96px;font-size:18px;color:#4a5259;letter-spacing:0.097px;-webkit-text-stroke:0.150px #4a5259;">Amazon Web Service, Inc</span>
<div class="a" style="left:1138px;top:687.6px;width:26.500px;height:26.500px;border:2px solid #cdd4db;border-radius:6px;background:#fff"></div>
<span class="t" style="left:1174.50px;top:692.46px;font-size:18px;color:#4a5259;letter-spacing:-0.005px;-webkit-text-stroke:0.150px #4a5259;">Google, Inc.</span>
<div class="a" style="left:1138px;top:741.2px;width:26.500px;height:26.500px;border:2px solid #cdd4db;border-radius:6px;background:#fff"></div>
<span class="t" style="left:1174.50px;top:745.96px;font-size:18px;color:#4a5259;letter-spacing:0.498px;-webkit-text-stroke:0.150px #4a5259;">Microsoft</span>
<div class="btn" style="left:1325.500px;top:794.500px;width:97px;height:47.500px;border:1.700px solid #1c3a7e;border-radius:8px;background:#fff"></div>
<span class="t" style="left:1347.70px;top:810.89px;font-size:17.5px;color:#0b2a66;letter-spacing:-0.247px;-webkit-text-stroke:0.450px #0b2a66;">Cancel</span>
<div class="btn" style="left:1432.500px;top:794.500px;width:86.500px;height:47.500px;background:#e1ebfc;border-radius:8px"></div>
<span class="t" style="left:1454.30px;top:810.89px;font-size:17.5px;color:#0b2a66;letter-spacing:-0.544px;-webkit-text-stroke:0.450px #0b2a66;">Reset</span>
<div class="btn" style="left:1528.500px;top:794.500px;width:88px;height:47.500px;background:#0772ea;border-radius:8px"></div>
<span class="t" style="left:1550.40px;top:810.89px;font-size:17.5px;color:#fff;letter-spacing:0.044px;-webkit-text-stroke:0.450px #fff;">Apply</span>
<div class="box" style="left:1114.300px;top:426.200px;width:296.400px;height:50.600px;border:2px solid #4f96ec;border-radius:8px"></div>
<span class="t" style="left:1128.70px;top:443.99px;font-size:17.5px;color:#6c757d;letter-spacing:-0.026px;">Cloud Account<span style="font-family:'DejaVu Sans',sans-serif;font-size:17px;line-height:0">→</span>Cloud Vendor</span>
<svg style="left:1383.7px;top:447.45px" width="15" height="8.5" viewBox="0 0 15 8.5" fill="none" stroke="#6c757d" stroke-width="1.7"><path d="M0.700 0.700 7.5 7.5 14.3 0.700"/></svg>
<div class="a" style="left:1126.700px;top:468.900px;width:12px;height:12px;background:#fff;border-top:1.300px solid #e2e4e7;border-left:1.300px solid #e2e4e7;transform:rotate(45deg)"></div>
<div class="a" style="left:1118px;top:476.800px;width:40px;height:8px;background:#fff"></div>
<div class="a" style="left:734.400px;top:1284.800px;width:52.500px;height:52.500px;border-radius:50%;background:#eef4fd"></div>
<svg style="left:0;top:0" width="1999" height="1500" viewBox="0 0 1999 1500" fill="none" stroke="#adb5bd" stroke-width="1.700"><path d="M644.6 1306.1 639.2 1311.0 644.6 1315.9M651.8 1306.1 646.4 1311.0 651.8 1315.9"/></svg>
<svg style="left:0;top:0" width="1999" height="1500" viewBox="0 0 1999 1500" fill="none" stroke="#adb5bd" stroke-width="1.700"><path d="M705.9 1306.1 700.5 1311.0 705.9 1315.9"/></svg>
<svg style="left:0;top:0" width="1999" height="1500" viewBox="0 0 1999 1500" fill="none" stroke="#495057" stroke-width="1.700"><path d="M1045.0 1306.1 1050.4 1311.0 1045.0 1315.9"/></svg>
<svg style="left:0;top:0" width="1999" height="1500" viewBox="0 0 1999 1500" fill="none" stroke="#495057" stroke-width="1.700"><path d="M1099.2 1306.1 1104.6 1311.0 1099.2 1315.9M1106.4 1306.1 1111.8 1311.0 1106.4 1315.9"/></svg>
<span class="t" style="left:755.60px;top:1302.54px;font-size:18.5px;color:#1d62d8;">1</span>
<span class="t" style="left:813.10px;top:1302.54px;font-size:18.5px;color:#6c757d;">2</span>
<span class="t" style="left:870.60px;top:1302.54px;font-size:18.5px;color:#6c757d;">3</span>
<span class="t" style="left:928.10px;top:1302.54px;font-size:18.5px;color:#6c757d;">4</span>
<span class="t" style="left:985.60px;top:1302.54px;font-size:18.5px;color:#6c757d;">5</span>
<span class="t" style="left:1705.00px;top:1302.34px;font-size:18.5px;color:#6c757d;letter-spacing:0.118px;">Total <b>3534</b> Cloud Resources</span>
<div class="hl" style="left:30px;top:1378.500px;width:1936.500px;background:#e5e7ea"></div>
<div class="a" style="left:0;top:1420.500px;width:1999px;height:80px;background:#fff;border-top:1.500px solid #e6eaf2;box-shadow:0 -2px 5px rgba(30,60,120,.05)"></div>
<div class="btn" style="left:1539px;top:1437px;width:95.800px;height:47px;border:1.700px solid #1c3a7e;border-radius:8px;background:#fff"></div>
<span class="t" style="left:1561.50px;top:1452.69px;font-size:17.5px;color:#0b2a66;letter-spacing:-0.247px;-webkit-text-stroke:0.450px #0b2a66;">Cancel</span>
<div class="btn" style="left:1655px;top:1437px;width:208.800px;height:47px;background:#e1ebfc;border-radius:8px"></div>
<span class="t" style="left:1677.50px;top:1452.69px;font-size:17.5px;color:#0b2a66;letter-spacing:-0.362px;-webkit-text-stroke:0.450px #0b2a66;">Save and add another</span>
<div class="btn" style="left:1884px;top:1437px;width:79.800px;height:47px;background:#0772ea;border-radius:8px"></div>
<span class="t" style="left:1906.00px;top:1452.69px;font-size:17.5px;color:#fff;letter-spacing:-0.723px;-webkit-text-stroke:0.450px #fff;">Save</span>
</div>
</body></html>
